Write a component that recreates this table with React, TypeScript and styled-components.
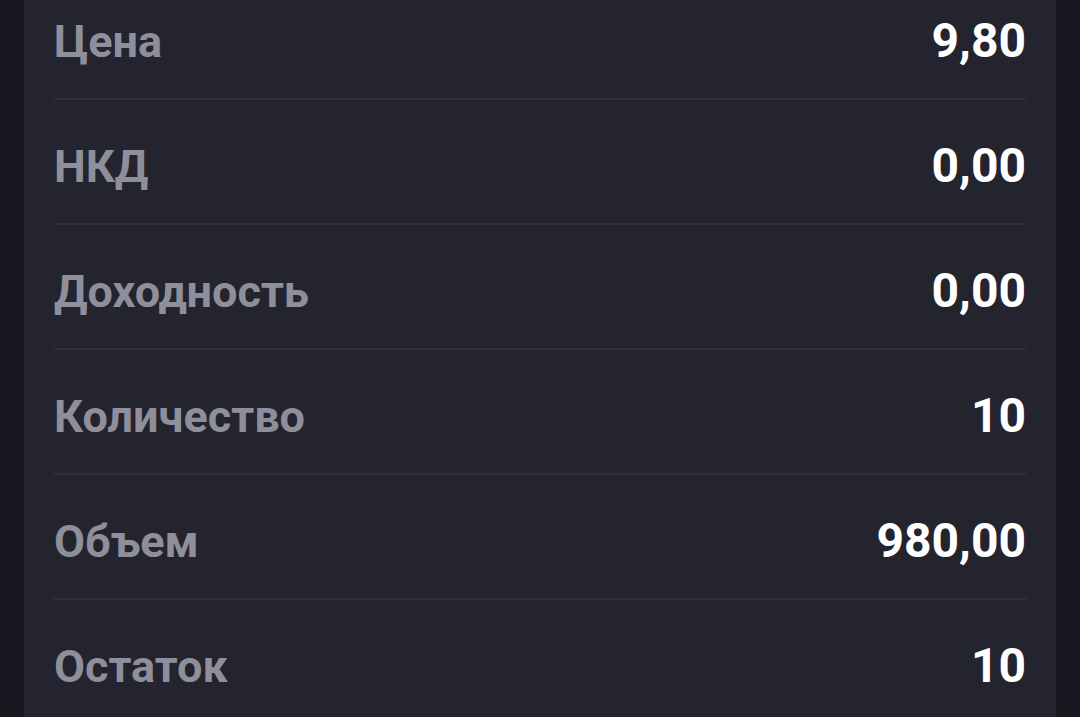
import React from "react";
import styled, { createGlobalStyle } from "styled-components";

const Global = createGlobalStyle`
  html, body { margin: 0; padding: 0; background: #17171f; }
  body { font-family: Roboto, "Noto Sans", sans-serif; overflow: hidden; }
`;

const Page = styled.div`
  height: 717px;
  padding: 0 24px;
  background: #17171f;
  overflow: hidden;
`;

const Card = styled.div`
  background: #24242e;
  padding: 0 30px;
  margin-top: -25px;
  height: 742px;
`;

const Row = styled.div<{ $last?: boolean }>`
  display: flex;
  justify-content: space-between;
  align-items: center;
  box-sizing: border-box;
  height: 125px;
  padding-top: 9px;
  border-bottom: 2px solid ${(p) => (p.$last ? "transparent" : "#2f303b")};
`;

const Label = styled.span`
  font-size: 45px;
  font-weight: 700;
  color: #8e8f9b;
  line-height: 1;
`;

const Value = styled.span`
  font-size: 48px;
  font-weight: 700;
  color: #ffffff;
  line-height: 1;
`;

const rows = [
  ["Цена", "9,80"],
  ["НКД", "0,00"],
  ["Доходность", "0,00"],
  ["Количество", "10"],
  ["Объем", "980,00"],
  ["Остаток", "10"],
];

export default function App() {
  return (
    <>
      <Global />
      <Page>
        <Card>
          {rows.map(([l, v], i) => (
            <Row key={l} $last={i === rows.length - 1}>
              <Label>{l}</Label>
              <Value>{v}</Value>
            </Row>
          ))}
        </Card>
      </Page>
    </>
  );
}
